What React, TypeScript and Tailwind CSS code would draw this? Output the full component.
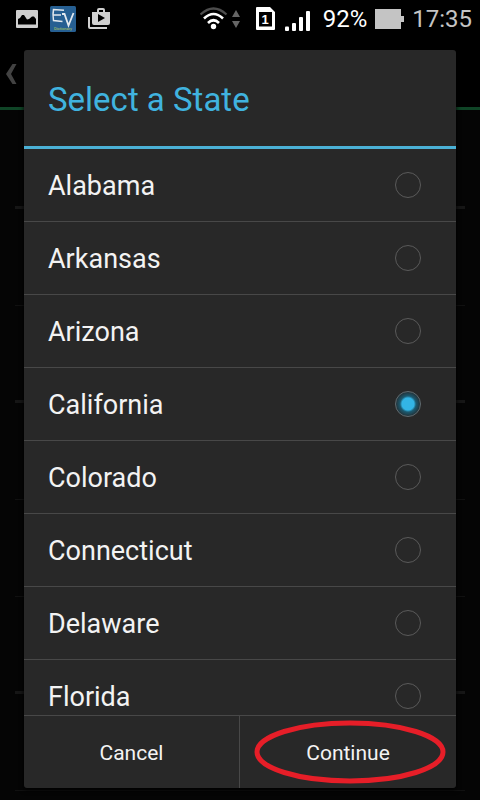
import { useState } from "react";

const states = [
  "Alabama",
  "Arkansas",
  "Arizona",
  "California",
  "Colorado",
  "Connecticut",
  "Delaware",
  "Florida",
];

function StatusBar() {
  return (
    <header className="flex h-[38px] shrink-0 items-center bg-black pr-2 pl-4 text-2xl text-[#c4c4c4]">
      <svg className="h-5 w-[22px]" viewBox="0 0 22 20" aria-hidden="true">
        <path
          fill="#d0d0d0"
          fillRule="evenodd"
          d="M1 1h20q1 0 1 1v16q0 1-1 1H1q-1 0-1-1V2q0-1 1-1zM2 15.500h18V10l-2-2.500h-2L13 10l-2 .500L8 6H6L4 9l-2 1z"
        />
      </svg>
      <svg className="ml-3 size-[26px]" viewBox="0 0 26 26" aria-hidden="true">
        <rect width="26" height="26" rx="1.500" fill="#265f92" />
        <g fill="none" stroke="#e2e8ee">
          <path strokeWidth="1.500" d="M14 4.200L3.500 3.500Q2.500 8 3.500 14.500L12.500 15.500M3 9h8" />
          <path strokeWidth="1.800" d="M12 8h2.500l4 11.500L23.500 7" />
        </g>
        <text x="4" y="24" fontSize="4" fill="#b9cf5c" fontFamily="Roboto">
          Dictionary
        </text>
      </svg>
      <svg className="ml-3 h-[22px] w-[22px]" viewBox="0 0 22 22" aria-hidden="true">
        <path
          fill="#d0d0d0"
          fillRule="evenodd"
          d="M4 4h5V2q0-2 2-2h4q2 0 2 2v2h5v11q0 2-2 2H6q-2 0-2-2zM11 4h4V2h-4zM10 6v8l7-4z"
        />
        <path fill="#d0d0d0" d="M0 9h2v10h17v2H2q-2 0-2-2z" />
      </svg>

      <div className="ml-auto flex items-center">
        <svg className="h-6 w-10" viewBox="0 0 40 24" aria-hidden="true">
          <g fill="none">
            <path stroke="#4d4d4d" strokeWidth="2.200" d="M.500 7.500q13-12 26 0" />
            <path stroke="#fff" strokeWidth="2.600" d="M4 11.500q9.500-9 19 0M8 16q5.500-5.500 11 0" />
          </g>
          <circle cx="13.500" cy="19.500" r="2.700" fill="#fff" />
          <path fill="#666" d="M36 3l4 7h-8zM36 21l4-7h-8z" />
        </svg>
        <svg className="ml-4 h-6 w-[19px]" viewBox="0 0 19 24" aria-hidden="true">
          <path
            fill="#fff"
            fillRule="evenodd"
            d="M1 0h13l5 5v17q0 1-1 1H1q-1 0-1-1V1q0-1 1-1zM3 5v14.500h13V5z"
          />
          <text x="9" y="17" textAnchor="middle" fontSize="13" fontWeight="700" fill="#fff" fontFamily="Liberation Sans">
            1
          </text>
        </svg>
        <svg className="ml-2.5 h-6 w-[26px]" viewBox="0 0 26 24" fill="#fff" aria-hidden="true">
          <rect y="19.500" width="4" height="4.500" rx="1" />
          <rect x="7" y="16" width="4" height="8" rx="1" />
          <rect x="14" y="10" width="4" height="14" rx="1" />
          <rect x="21" y="4" width="4" height="20" rx="1" />
        </svg>
        <span className="ml-3 text-white">92%</span>
        <svg className="ml-2 h-5 w-[29px]" viewBox="0 0 29 20" fill="#c4c4c4" aria-hidden="true">
          <path d="M0 0h26v7h3v6h-3v7H0z" />
        </svg>
        <span className="ml-2">17:35</span>
      </div>
    </header>
  );
}

// Dimmed screen that stays visible around the dialog
function DimmedPage() {
  return (
    <main className="flex min-h-0 flex-1 flex-col overflow-hidden bg-[#050505]">
      <div className="flex h-[72px] shrink-0 items-center border-b-3 border-[#0f4426] bg-black pt-0.5 pl-1.5">
        <svg className="h-[22px] w-3" viewBox="0 0 12 22" aria-hidden="true">
          <path fill="#424242" d="M6.500 1h4L5 11l5.500 10h-4L0 11z" />
        </svg>
      </div>
      <div className="flex flex-col px-[15px] pt-0.5">
        <div className="h-[97px] border-b-3 border-[#161616]" />
        <div className="h-[97px] border-b border-[#111]" />
        <div className="h-[97px] border-b-3 border-[#161616]" />
        <div className="h-[97px] border-b border-[#111]" />
        <div className="h-[97px] border-b border-[#111]" />
        <div className="h-[97px] border-b-3 border-[#161616]" />
        <div className="h-[97px] border-b border-[#111]" />
      </div>
    </main>
  );
}

interface StateRowProps {
  name: string;
  checked: boolean;
  onSelect: () => void;
}

function StateRow({ name, checked, onSelect }: StateRowProps) {
  return (
    <label className="flex h-[73px] shrink-0 items-center justify-between border-b border-[#484848] pr-[35px] pl-6 text-[27px] text-[#f3f3f3]">
      <span className="pt-0.5">{name}</span>
      <input
        type="radio"
        name="state"
        value={name}
        checked={checked}
        onChange={onSelect}
        className="size-[26px] appearance-none rounded-full border border-[#5a5a5a] checked:border-[#5f6b70] checked:bg-[radial-gradient(circle,#33b5e5_0_6px,#1b5a70_8px,#23343b_12px)]"
      />
    </label>
  );
}

export default function App() {
  const [selected, setSelected] = useState("California");

  return (
    <div className="relative flex h-screen flex-col overflow-hidden bg-black font-['Roboto',sans-serif]">
      <StatusBar />
      <DimmedPage />

      <div className="absolute inset-0 flex flex-col px-6 pt-[50px] pb-3">
        <form
          role="dialog"
          aria-labelledby="dialog-title"
          onSubmit={(e) => e.preventDefault()}
          className="flex min-h-0 flex-1 flex-col overflow-hidden rounded-[3px] bg-[#282828] shadow-[0_2px_5px_#000]"
        >
          <h1
            id="dialog-title"
            className="flex h-[99px] shrink-0 items-center border-b-3 border-[#4bb1d6] px-6 pt-1 text-[33px] text-[#40b3df]"
          >
            Select a State
          </h1>
          <div className="flex min-h-0 flex-1 flex-col overflow-y-auto [scrollbar-width:none]">
            {states.map((name) => (
              <StateRow
                key={name}
                name={name}
                checked={selected === name}
                onSelect={() => setSelected(name)}
              />
            ))}
          </div>
          <div className="grid h-[73px] shrink-0 grid-cols-2 border-t border-[#484848] text-[21px] text-[#f3f3f3]">
            <button type="button" className="border-r border-[#484848] pt-1">
              Cancel
            </button>
            <button type="submit" className="relative pt-1">
              Continue
              <svg
                className="absolute inset-x-3.5 top-1 h-16 w-[192px]"
                viewBox="0 0 192 64"
                aria-hidden="true"
              >
                <ellipse cx="96" cy="32" rx="93" ry="29" fill="none" stroke="#e61e28" strokeWidth="5" />
              </svg>
            </button>
          </div>
        </form>
      </div>
    </div>
  );
}
